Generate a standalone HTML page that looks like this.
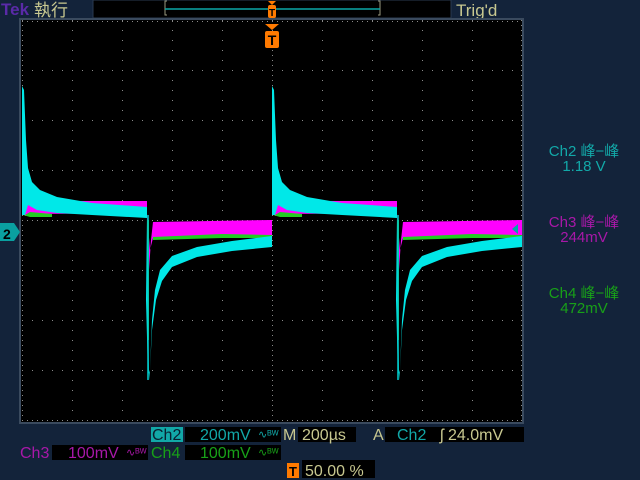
<!DOCTYPE html>
<html><head><meta charset="utf-8"><style>
html,body{margin:0;padding:0;width:640px;height:480px;overflow:hidden;background:#13233a;}
svg{display:block}
text{font-family:"Liberation Sans","Noto Sans CJK SC",sans-serif;}
</style></head><body>
<svg width="640" height="480" viewBox="0 0 640 480" xmlns="http://www.w3.org/2000/svg">
<defs>
<g id="per">
 <!-- magenta -->
 <polygon fill="#ff00ff" points="2,200 4,170 6,195 12,204 60,201 125,201 125,213 12,214 3,216"/>
 <polygon fill="#ff00ff" points="125,213 127,270 129,240 131,222 250,220 250,237 131,238 128,250"/>
 <!-- green -->
 <polygon fill="#22cc22" points="1,215 2,120 3,215 8,212 30,214 30,217 8,217"/>
 <polygon fill="#22cc22" points="131,237 200,234 250,235 250,238 200,238 131,240"/>
 <line x1="126" y1="220" x2="126" y2="340" stroke="#22aa22" stroke-width="2"/>
 <!-- cyan -->
 <polygon fill="#00e8e8" points="0,215 0,86 2,90 4,140 6,168 10,182 18,190 35,197 70,203 125,207 125,218 70,215 35,213 15,210 6,205 3,215"/>
 <polygon fill="#00e8e8" points="125,216 126,300 127,380 128,370 130,320 133,290 138,270 150,256 175,247 210,241 250,236 250,247 210,251 175,257 150,267 140,281 134,300 130,330 128,370 126,375 124,300"/>
 <line x1="126" y1="215" x2="126" y2="380" stroke="#00d0d0" stroke-width="1.5"/>
</g>
</defs>
<!-- top bar -->
<text x="1" y="15" font-size="17" fill="#5a2aa8" font-weight="bold">Tek</text>
<text x="34" y="16" font-size="17" fill="#c8c890">執行</text>
<rect x="93" y="0" width="358" height="18" fill="#000" stroke="#2a3a50" stroke-width="1"/>
<path d="M167 1h-2v14h2 M378 1h2v14h-2" stroke="#9a9a80" fill="none" stroke-width="1"/>
<line x1="165" y1="9" x2="380" y2="9" stroke="#0aa8a8" stroke-width="1.5"/>
<polygon points="268,1 276,1 272,5" fill="#ff7a00"/>
<rect x="268" y="5" width="8" height="13" rx="2" fill="#ff7a00"/>
<text x="272" y="16" font-size="10" fill="#000" text-anchor="middle" font-weight="bold">T</text>
<text x="456" y="16" font-size="17" fill="#c8c890">Trig'd</text>
<!-- graticule -->
<rect x="20" y="19" width="503" height="404" fill="#000" stroke="#3a4a5e" stroke-width="2"/>
<g stroke="#8a8a8a" stroke-width="1" stroke-dasharray="1 9">
 <line x1="22" y1="70.5" x2="522" y2="70.5"/><line x1="22" y1="120.5" x2="522" y2="120.5"/><line x1="22" y1="170.5" x2="522" y2="170.5"/>
 <line x1="22" y1="220.5" x2="522" y2="220.5" stroke-dasharray="1 4"/>
 <line x1="22" y1="270.5" x2="522" y2="270.5"/><line x1="22" y1="320.5" x2="522" y2="320.5"/><line x1="22" y1="370.5" x2="522" y2="370.5"/>
 <line x1="72.5" y1="20" x2="72.5" y2="422"/><line x1="122.5" y1="20" x2="122.5" y2="422"/><line x1="172.5" y1="20" x2="172.5" y2="422"/><line x1="222.5" y1="20" x2="222.5" y2="422"/>
 <line x1="272.5" y1="20" x2="272.5" y2="422" stroke-dasharray="1 4"/>
 <line x1="322.5" y1="20" x2="322.5" y2="422"/><line x1="372.5" y1="20" x2="372.5" y2="422"/><line x1="422.5" y1="20" x2="422.5" y2="422"/><line x1="472.5" y1="20" x2="472.5" y2="422"/>
 <line x1="22.5" y1="20" x2="22.5" y2="422" stroke-dasharray="1 4"/><line x1="521.5" y1="20" x2="521.5" y2="422" stroke-dasharray="1 4"/>
 <line x1="22" y1="21.5" x2="522" y2="21.5" stroke-dasharray="1 4"/><line x1="22" y1="420.5" x2="522" y2="420.5" stroke-dasharray="1 4"/>
</g>
<!-- T marker -->
<polygon points="265,24 279,24 272,30" fill="#ff7a00"/>
<rect x="265" y="31" width="14" height="17" rx="2" fill="#ff7a00"/>
<text x="272" y="45" font-size="14" fill="#000" text-anchor="middle" font-weight="bold">T</text>
<!-- waveforms -->
<use href="#per" transform="translate(22,0)"/>
<use href="#per" transform="translate(272,0)"/>
<polygon points="512,229 518,224 518,234" fill="#00a8a8"/>
<!-- ch2 marker -->
<path d="M0 223h14l6 9l-6 9h-14z" fill="#0aa0a0"/>
<text x="3" y="239" font-size="14" fill="#000" font-weight="bold">2</text>
<!-- right panel -->
<g font-size="15" text-anchor="middle">
<text x="584" y="156" fill="#12a8a8">Ch2 峰−峰</text>
<text x="584" y="171" fill="#12a8a8">1.18 V</text>
<text x="584" y="227" fill="#a818a8">Ch3 峰−峰</text>
<text x="584" y="242" fill="#a818a8">244mV</text>
<text x="584" y="298" fill="#18a018">Ch4 峰−峰</text>
<text x="584" y="313" fill="#18a018">472mV</text>
</g>
<!-- bottom -->
<g font-size="16">
<rect x="151" y="427" width="32" height="15" fill="#12a8a8"/>
<text x="152" y="440" fill="#0a2030">Ch2</text>
<rect x="185" y="427" width="96" height="15" fill="#000"/>
<text x="200" y="440" fill="#12a8a8">200mV</text>
<text x="258" y="438" font-size="11" fill="#12a8a8">∿ᴮᵂ</text>
<text x="283" y="440" fill="#c8c890">M</text>
<rect x="298" y="427" width="58" height="15" fill="#000"/>
<text x="302" y="440" fill="#c8c890">200µs</text>
<text x="373" y="440" fill="#c8c890">A</text>
<rect x="385" y="427" width="139" height="15" fill="#000"/>
<text x="397" y="440" fill="#12a8a8">Ch2</text>
<text x="440" y="440" fill="#c8c890">ʃ  24.0mV</text>
<text x="20" y="458" fill="#a818a8">Ch3</text>
<rect x="52" y="445" width="96" height="15" fill="#000"/>
<text x="68" y="458" fill="#a818a8">100mV</text>
<text x="126" y="456" font-size="11" fill="#a818a8">∿ᴮᵂ</text>
<text x="151" y="458" fill="#18a018">Ch4</text>
<rect x="185" y="445" width="96" height="15" fill="#000"/>
<text x="200" y="458" fill="#18a018">100mV</text>
<text x="258" y="456" font-size="11" fill="#18a018">∿ᴮᵂ</text>
<rect x="287" y="463" width="12" height="15" fill="#ff7a00"/>
<text x="289" y="476" font-size="13" fill="#000" font-weight="bold">T</text>
<rect x="302" y="460" width="73" height="18" fill="#000"/>
<text x="305" y="476" fill="#c8c890">50.00 %</text>
</g>
</svg>
</body></html>
